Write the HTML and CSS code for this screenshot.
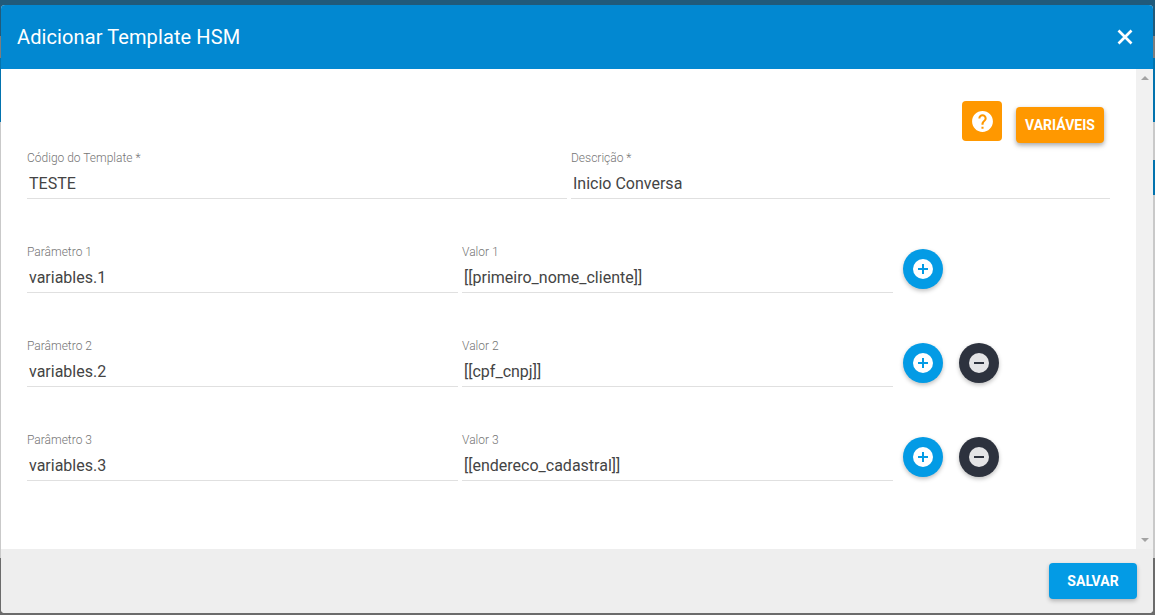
FILE: index.html
```html
<!DOCTYPE html>
<html lang="pt">
<head>
<meta charset="utf-8">
<title>Adicionar Template HSM</title>
<link rel="stylesheet" href="styles.css">
</head>
<body>
<div class="backdrop">
  <span class="bg-band"></span>
  <div class="modal">
    <header class="modal-header">
      <h1 class="modal-title">Adicionar Template HSM</h1>
      <button class="close" aria-label="Fechar">
        <svg width="16" height="16" viewBox="0 0 16 16"><path d="M1.500 1.500 14.500 14.500M14.500 1.500 1.500 14.500" stroke="#fff" stroke-width="2.700" fill="none"/></svg>
      </button>
    </header>
    <div class="modal-body">
      <div class="content">
        <div class="toolbar">
          <button class="help" aria-label="Ajuda">
            <svg width="25" height="25" viewBox="0 0 24 24"><path fill="#fff" d="M12 2C6.480 2 2 6.480 2 12s4.480 10 10 10 10-4.480 10-10S17.520 2 12 2zm1 17h-2v-2h2v2zm2.070-7.750l-.9.920C13.450 12.900 13 13.500 13 15h-2v-.5c0-1.100.45-2.100 1.170-2.830l1.240-1.260c.37-.36.590-.86.590-1.410 0-1.100-.9-2-2-2s-2 .9-2 2H8c0-2.210 1.790-4 4-4s4 1.790 4 4c0 .880-.36 1.680-.93 2.250z"/></svg>
          </button>
          <button class="variables">VARIÁVEIS</button>
        </div>
        <div class="row row-top">
          <div class="field field-code"><label>Código do Template *</label><div class="value">TESTE</div></div>
          <div class="field field-desc"><label>Descrição *</label><div class="value">Inicio Conversa</div></div>
        </div>
        <div class="row row-param">
          <div class="field field-param"><label>Parâmetro 1</label><div class="value">variables.1</div></div>
          <div class="field field-val"><label>Valor 1</label><div class="value">[[primeiro_nome_cliente]]</div></div>
          <div class="actions">
            <button class="round add" aria-label="Adicionar"><svg width="20" height="20" viewBox="0 0 20 20"><circle cx="10" cy="10" r="10" fill="#fff"/><path d="M10 5v10M5 10h10" stroke="#039be5" stroke-width="2"/></svg></button>
          </div>
        </div>
        <div class="row row-param">
          <div class="field field-param"><label>Parâmetro 2</label><div class="value">variables.2</div></div>
          <div class="field field-val"><label>Valor 2</label><div class="value">[[cpf_cnpj]]</div></div>
          <div class="actions">
            <button class="round add" aria-label="Adicionar"><svg width="20" height="20" viewBox="0 0 20 20"><circle cx="10" cy="10" r="10" fill="#fff"/><path d="M10 5v10M5 10h10" stroke="#039be5" stroke-width="2"/></svg></button>
            <button class="round remove" aria-label="Remover"><svg width="20" height="20" viewBox="0 0 20 20"><circle cx="10" cy="10" r="10" fill="#e4e4e6"/><path d="M5 10h10" stroke="#2d323e" stroke-width="2"/></svg></button>
          </div>
        </div>
        <div class="row row-param">
          <div class="field field-param"><label>Parâmetro 3</label><div class="value">variables.3</div></div>
          <div class="field field-val"><label>Valor 3</label><div class="value">[[endereco_cadastral]]</div></div>
          <div class="actions">
            <button class="round add" aria-label="Adicionar"><svg width="20" height="20" viewBox="0 0 20 20"><circle cx="10" cy="10" r="10" fill="#fff"/><path d="M10 5v10M5 10h10" stroke="#039be5" stroke-width="2"/></svg></button>
            <button class="round remove" aria-label="Remover"><svg width="20" height="20" viewBox="0 0 20 20"><circle cx="10" cy="10" r="10" fill="#e4e4e6"/><path d="M5 10h10" stroke="#2d323e" stroke-width="2"/></svg></button>
          </div>
        </div>
      </div>
      <div class="scrollbar"><span class="arrow-up"></span><span class="arrow-down"></span></div>
    </div>
    <footer class="modal-footer"><button class="save">SALVAR</button></footer>
  </div>
</div>
</body>
</html>
```
FILE: styles.css
```css
* { box-sizing: border-box; }
html, body { margin: 0; height: 100%; overflow: hidden; }
body { font-family: Roboto, "Liberation Sans", sans-serif; }
button { font-family: inherit; border: 0; padding: 0; cursor: pointer; }
.backdrop {
  position: relative;
  width: 1155px;
  height: 615px;
  padding: 5px 2px 2px 1px;
  background: linear-gradient(to bottom,
    #215a7a 0, #215a7a 36px,
    #7d7d7d 36px, #7d7d7d 58px,
    #0273ae 58px, #0273ae 122px,
    #c9c9c9 122px, #c9c9c9 558px,
    #6b6b6b 558px, #6b6b6b 615px);
}
.bg-band { position: absolute; right: 0; top: 160px; width: 2px; height: 35px; background: #0273ae; }
.modal { position: relative; width: 1152px; height: 608px; display: flex; flex-direction: column; border-radius: 4px; overflow: hidden; background: #fff; }
.modal-header { height: 64px; flex: none; background: #0288d1; color: #fff; display: flex; align-items: center; justify-content: space-between; padding: 0 20px 0 16px; }
.modal-title { margin: 0; font-size: 20px; font-weight: 400; letter-spacing: 0.1px; }
.close { background: none; width: 16px; height: 16px; display: block; }
.close svg { display: block; }
.modal-body { flex: 1; display: flex; min-height: 0; background: #fff; }
.content { flex: 1; padding: 32px 0 0 26px; }
.toolbar { display: flex; justify-content: flex-end; align-items: flex-start; height: 42px; padding-right: 32px; gap: 14px; }
.help { width: 40px; height: 40px; background: #ff9800; border-radius: 4px; display: flex; align-items: center; justify-content: center; }
.variables { width: 88px; height: 36px; margin-top: 6px; background: #ff9800; color: #fff; font-size: 14px; font-weight: 700; border-radius: 4px; box-shadow: 0 2px 4px rgba(0,0,0,.25), 0 3px 6px rgba(0,0,0,.12); }
.row { display: flex; gap: 4px; }
.row-top { margin-top: 6px; height: 50px; }
.row-param { margin-top: 44px; height: 50px; }
.field { display: flex; flex-direction: column; border-bottom: 1px solid #e0e0e0; height: 50px; }
.field label { font-size: 12px; line-height: 14px; color: #757575; height: 25px; padding-top: 2px; font-weight: 300; }
.field .value { font-size: 16px; line-height: 20px; color: #444444; padding-left: 2px; }
.field-code { width: 540px; }
.field-desc { width: 539px; }
.field-param { width: 431px; }
.field-val { width: 431px; }
.actions { display: flex; gap: 16px; margin-left: 6px; padding-top: 6px; }
.round { width: 40px; height: 40px; border-radius: 50%; display: flex; align-items: center; justify-content: center; box-shadow: 0 2px 4px rgba(0,0,0,.25); }
.add { background: #039be5; }
.remove { background: #2d323e; }
.scrollbar { flex: none; width: 17px; background: #f1f1f1; position: relative; }
.arrow-up { position: absolute; top: 7px; left: 5px; width: 0; height: 0; border-left: 4px solid transparent; border-right: 4px solid transparent; border-bottom: 4px solid #a3a3a3; }
.arrow-down { position: absolute; bottom: 7px; left: 5px; width: 0; height: 0; border-left: 4px solid transparent; border-right: 4px solid transparent; border-top: 4px solid #a3a3a3; }
.modal-footer { flex: none; height: 64px; background: #eeeeee; display: flex; align-items: center; justify-content: flex-end; padding-right: 16px; }
.save { width: 88px; height: 36px; background: #039be5; color: #fff; font-size: 14px; font-weight: 700; border-radius: 4px; box-shadow: 0 2px 4px rgba(0,0,0,.25); }
```
